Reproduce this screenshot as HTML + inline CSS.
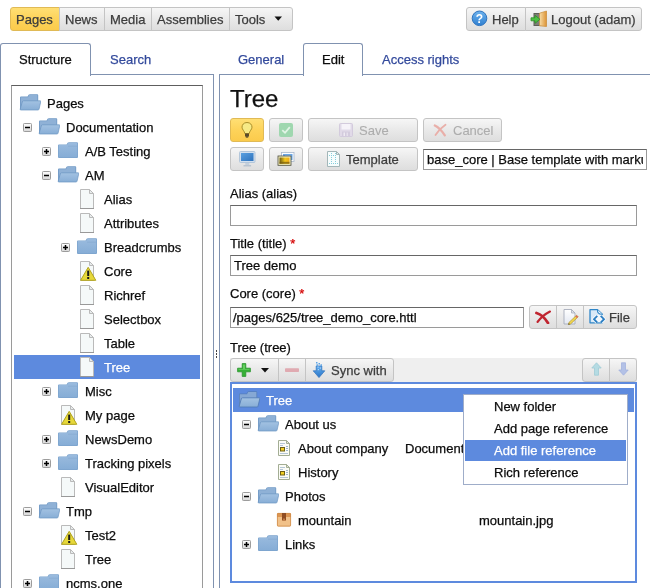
<!DOCTYPE html>
<html><head><meta charset="utf-8"><title>Pages</title>
<style>
html,body{margin:0;padding:0;background:#fff;}
body{width:650px;height:588px;overflow:hidden;position:relative;font-family:"Liberation Sans",Arial,sans-serif;font-size:13px;color:#0c0c0c;-webkit-text-stroke:0.25px;}
div,svg{position:absolute;box-sizing:border-box;}
.btn{border:1px solid #c4c4c4;background:linear-gradient(#f6f6f6,#e9e9e9 50%,#dedede);height:24px;line-height:24px;white-space:nowrap;color:#3c3c3c;padding-top:0}
.btn.y{background:linear-gradient(#ffdf74,#fdd35a 50%,#fbcb4c);border-color:#e0ba56;}
.btn.dis{color:#adadad;-webkit-text-stroke:0.1px}
.btn span{position:absolute;top:0;line-height:23px}
.lbl{white-space:nowrap;line-height:16px;height:16px;}
.w{color:#fff;}
.sel{background:#5d8ade;}
.inp{border:1px solid #9a9a9a;border-top-color:#666;background:#fff;height:21px;line-height:19px;padding-left:3px;white-space:nowrap;overflow:hidden;}
.blue{color:#334a9c;}
.red{color:#d40000;}

#root{left:0;top:0;width:650px;height:588px;will-change:transform;}
</style></head><body><div id="root">
<svg width="0" height="0" style="position:absolute">
<defs>
<linearGradient id="gfb" x1="0" y1="0" x2="0" y2="1"><stop offset="0" stop-color="#a3c2e2"/><stop offset="1" stop-color="#88aed6"/></linearGradient>
<linearGradient id="gfc" x1="0" y1="0" x2="0" y2="1"><stop offset="0" stop-color="#9abbde"/><stop offset="1" stop-color="#86add6"/></linearGradient>
<linearGradient id="gex" x1="0" y1="0" x2="0" y2="1"><stop offset="0" stop-color="#ffffff"/><stop offset="1" stop-color="#d6d6d6"/></linearGradient>
<symbol id="fc" viewBox="0 0 22 22">
 <path d="M1 5.400 Q1 4.400 2 4.400 L9.600 4.400 L10.600 2.800 Q11 2.200 12 2.200 L20 2.200 Q21 2.200 21 3.200 L21 17 Q21 18 20 18 L2 18 Q1 18 1 17 Z" fill="#7ba3cd"/>
 <path d="M1.700 5.600 Q1.700 5.100 2.200 5.100 L10 5.100 L11.200 3.200 Q11.400 2.900 12 2.900 L19.800 2.900 Q20.300 2.900 20.300 3.400 L20.300 16.600 Q20.300 17.300 19.600 17.300 L2.400 17.300 Q1.700 17.300 1.700 16.600 Z" fill="url(#gfc)"/>
 <rect x="11" y="5.800" width="9.300" height=".7" fill="#7ba3cd" opacity=".6"/>
</symbol>
<symbol id="fo" viewBox="0 0 22 22">
 <path d="M1 5.400 Q1 4.400 2 4.400 L8.600 4.400 L9.600 2.800 Q10 2.200 11 2.200 L18.200 2.200 Q19.200 2.200 19.200 3.200 L19.200 10 L3 18 L1 17.500 Z" fill="#7099c5"/>
 <path d="M1.800 5.300 L9 5.300 L10.200 3 L18.400 3 L18.400 9 L3.500 9 L1.800 16 Z" fill="#8fb1d6"/>
 <path d="M4.400 8.800 L21.200 8.800 Q22 8.800 21.800 9.600 L20 17.300 Q19.800 18 19 18 L1.900 18 Q1 18 1.200 17.200 L3.400 9.600 Q3.600 8.800 4.400 8.800 Z" fill="url(#gfb)" stroke="#6c95c1" stroke-width=".7"/>
</symbol>
<symbol id="fos" viewBox="0 0 22 22">
 <path d="M1 5.400 Q1 4.400 2 4.400 L8.600 4.400 L9.600 2.800 Q10 2.200 11 2.200 L18.200 2.200 Q19.200 2.200 19.200 3.200 L19.200 10 L3 18 L1 17.500 Z" fill="#557fbb"/>
 <path d="M1.800 5.300 L9 5.300 L10.200 3 L18.400 3 L18.400 9 L3.500 9 L1.800 16 Z" fill="#86a8d4"/>
 <path d="M4.400 8.800 L21.200 8.800 Q22 8.800 21.800 9.600 L20 17.300 Q19.800 18 19 18 L1.900 18 Q1 18 1.200 17.200 L3.400 9.600 Q3.600 8.800 4.400 8.800 Z" fill="url(#gfb)" stroke="#4f78b4" stroke-width=".8"/>
</symbol>
<symbol id="pg" viewBox="0 0 22 22">
 <path d="M4.500 1.500 L13.500 1.500 L17.500 5.500 L17.500 20.500 L4.500 20.500 Z" fill="#f5f9f9" stroke="#bababa" stroke-width="1"/>
 <path d="M13.500 1.500 L13.500 5.500 L17.500 5.500 Z" fill="#e8ecec" stroke="#bababa" stroke-width="1" stroke-linejoin="round"/>
 <rect x="4" y="20" width="14" height="1" fill="#999"/>
</symbol>
<symbol id="wr" viewBox="0 0 22 22">
 <path d="M4.500 1.500 L13.500 1.500 L17.500 5.500 L17.500 20.500 L4.500 20.500 Z" fill="#f5f9f9" stroke="#bababa" stroke-width="1"/>
 <path d="M13.500 1.500 L13.500 5.500 L17.500 5.500 Z" fill="#e8ecec" stroke="#bababa" stroke-width="1" stroke-linejoin="round"/>
 <path d="M12.200 7.300 L19.800 20.300 L4.600 20.300 Z" fill="#e6d83a" stroke="#b3a41c" stroke-width="1" stroke-linejoin="round"/>
 <rect x="11.200" y="10.600" width="2" height="5.400" fill="#1a1a1a"/><rect x="11.200" y="17" width="2" height="2" fill="#1a1a1a"/>
</symbol>
<symbol id="pr" viewBox="0 0 16 16">
 <path d="M2.500 0.500 L10.500 0.500 L13.500 3.500 L13.500 15.500 L2.500 15.500 Z" fill="#fbfcf6" stroke="#a3ad94" stroke-width="1"/>
 <path d="M10.500 0.500 L10.500 3.500 L13.500 3.500 Z" fill="#e3e8d8" stroke="#a3ad94" stroke-width="1" stroke-linejoin="round"/>
 <rect x="4.500" y="7.500" width="4" height="3.500" fill="#f1cf24" stroke="#6d5e16" stroke-width="1"/>
 <rect x="4" y="3" width="5" height="1" fill="#b5c6d8"/><rect x="4" y="5" width="3" height="1" fill="#b5c6d8"/>
 <rect x="10" y="6" width="2" height="1" fill="#9db4cc"/><rect x="10" y="8" width="2" height="1" fill="#9db4cc"/><rect x="10" y="10" width="2" height="1" fill="#9db4cc"/>
 <rect x="4" y="13" width="8" height="1" fill="#b5c6d8"/>
</symbol>
<symbol id="bx" viewBox="0 0 16 16">
 <rect x="1" y="1" width="14" height="13.500" rx="1.200" fill="#f1c189"/>
 <path d="M1 2.200 Q1 1 2.200 1 L13.800 1 Q15 1 15 2.200 L15 5 L1 5 Z" fill="#dc9552"/>
 <rect x="1.400" y="1.400" width="13.200" height="12.700" rx="1" fill="none" stroke="#cf8b4a" stroke-width=".8"/>
 <rect x="6" y="1" width="4" height="7.500" fill="#8f4c22"/>
 <rect x="7" y="6.500" width="2" height="2" fill="#c27a43"/>
</symbol>
<symbol id="plus" viewBox="0 0 9 9">
 <rect x="0.500" y="0.500" width="8" height="8" rx=".8" fill="url(#gex)" stroke="#9c9c9c"/>
 <rect x="2" y="3.750" width="5" height="1.500" fill="#000"/><rect x="3.750" y="2" width="1.500" height="5" fill="#000"/>
</symbol>
<symbol id="minus" viewBox="0 0 9 9">
 <rect x="0.500" y="0.500" width="8" height="8" rx=".8" fill="url(#gex)" stroke="#9c9c9c"/>
 <rect x="2" y="3.750" width="5" height="1.500" fill="#000"/>
</symbol>
</defs></svg>

<!-- top toolbar -->
<div class="btn y" style="left:10px;top:7px;width:50px;border-radius:3px 0 0 3px"><span style="left:5px">Pages</span></div>
<div class="btn" style="left:59px;top:7px;width:46px;"><span style="left:5px">News</span></div>
<div class="btn" style="left:104px;top:7px;width:48px"><span style="left:5px">Media</span></div>
<div class="btn" style="left:151px;top:7px;width:79px"><span style="left:5px">Assemblies</span></div>
<div class="btn" style="left:229px;top:7px;width:64px;border-radius:0 3px 3px 0"><span style="left:5px">Tools</span></div>
<svg style="left:274px;top:16px" width="9" height="6"><path d="M0.500 0.500 L8 0.500 L4.250 4.800 Z" fill="#111"/></svg>

<div class="btn" style="left:466px;top:7px;width:60px;border-radius:3px 0 0 3px"><span style="left:25px">Help</span></div>
<div class="btn" style="left:525px;top:7px;width:117px;border-radius:0 3px 3px 0"><span style="left:25px">Logout (adam)</span></div>
<svg style="left:471px;top:10px" width="17" height="17"><defs><linearGradient id="gh" x1="0" y1="0" x2="0" y2="1"><stop offset="0" stop-color="#6db3ee"/><stop offset="1" stop-color="#2f7fd0"/></linearGradient></defs><circle cx="8.500" cy="8.300" r="7.300" fill="url(#gh)" stroke="#2f73bd"/><text x="8.500" y="12.500" font-size="12" font-weight="bold" fill="#fff" text-anchor="middle" font-family="Liberation Sans,sans-serif">?</text></svg>
<svg style="left:529px;top:9px" width="20" height="20">
 <defs><linearGradient id="gdo" x1="0" y1="0" x2="1" y2="0"><stop offset="0" stop-color="#f7dca6"/><stop offset="1" stop-color="#dc9336"/></linearGradient></defs>
 <rect x="5" y="4.500" width="9" height="12" fill="#7d7d75" stroke="#5e5e58"/>
 <path d="M10.500 4.200 L17.500 2 L17.500 17.500 L10.500 16.800 Z" fill="url(#gdo)" stroke="#c98a34" stroke-width=".7"/>
 <path d="M2 8.800 L6 8.800 L6 6.300 L11 10.300 L6 14.300 L6 11.800 L2 11.800 Z" fill="#4cc042" stroke="#2f8f2a" stroke-width=".8" stroke-linejoin="round"/>
</svg>

<!-- left tabview -->
<div style="left:0;top:74px;width:214px;height:530px;border:1px solid #8092b0;"></div>
<div style="left:0;top:43px;width:91px;height:33px;border:1px solid #8092b0;border-bottom:0;border-radius:3px 3px 0 0;background:#fff"></div>
<div class="lbl" style="left:19px;top:52px">Structure</div>
<div class="lbl blue" style="left:110px;top:52px">Search</div>
<div style="left:11px;top:85px;width:192px;height:520px;border:1px solid #9a9a9a;border-top-color:#5e5e5e;"></div>
<svg class="ic" style="left:19px;top:92px" width="22" height="22"><use href="#fo"/></svg>
<div class="lbl" style="left:47px;top:96px">Pages</div>
<svg class="ic" style="left:23px;top:123px" width="9" height="9"><use href="#minus"/></svg>
<svg class="ic" style="left:38px;top:116px" width="22" height="22"><use href="#fo"/></svg>
<div class="lbl" style="left:66px;top:120px">Documentation</div>
<svg class="ic" style="left:42px;top:147px" width="9" height="9"><use href="#plus"/></svg>
<svg class="ic" style="left:57px;top:140px" width="22" height="22"><use href="#fc"/></svg>
<div class="lbl" style="left:85px;top:144px">A/B Testing</div>
<svg class="ic" style="left:42px;top:171px" width="9" height="9"><use href="#minus"/></svg>
<svg class="ic" style="left:57px;top:164px" width="22" height="22"><use href="#fo"/></svg>
<div class="lbl" style="left:85px;top:168px">AM</div>
<svg class="ic" style="left:76px;top:188px" width="22" height="22"><use href="#pg"/></svg>
<div class="lbl" style="left:104px;top:192px">Alias</div>
<svg class="ic" style="left:76px;top:212px" width="22" height="22"><use href="#pg"/></svg>
<div class="lbl" style="left:104px;top:216px">Attributes</div>
<svg class="ic" style="left:61px;top:243px" width="9" height="9"><use href="#plus"/></svg>
<svg class="ic" style="left:76px;top:236px" width="22" height="22"><use href="#fc"/></svg>
<div class="lbl" style="left:104px;top:240px">Breadcrumbs</div>
<svg class="ic" style="left:76px;top:260px" width="22" height="22"><use href="#wr"/></svg>
<div class="lbl" style="left:104px;top:264px">Core</div>
<svg class="ic" style="left:76px;top:284px" width="22" height="22"><use href="#pg"/></svg>
<div class="lbl" style="left:104px;top:288px">Richref</div>
<svg class="ic" style="left:76px;top:308px" width="22" height="22"><use href="#pg"/></svg>
<div class="lbl" style="left:104px;top:312px">Selectbox</div>
<svg class="ic" style="left:76px;top:332px" width="22" height="22"><use href="#pg"/></svg>
<div class="lbl" style="left:104px;top:336px">Table</div>
<div class="sel" style="left:14px;top:355px;width:186px;height:24px"></div>
<svg class="ic" style="left:76px;top:356px" width="22" height="22"><use href="#pg"/></svg>
<div class="lbl w" style="left:104px;top:360px">Tree</div>
<svg class="ic" style="left:42px;top:387px" width="9" height="9"><use href="#plus"/></svg>
<svg class="ic" style="left:57px;top:380px" width="22" height="22"><use href="#fc"/></svg>
<div class="lbl" style="left:85px;top:384px">Misc</div>
<svg class="ic" style="left:57px;top:404px" width="22" height="22"><use href="#wr"/></svg>
<div class="lbl" style="left:85px;top:408px">My page</div>
<svg class="ic" style="left:42px;top:435px" width="9" height="9"><use href="#plus"/></svg>
<svg class="ic" style="left:57px;top:428px" width="22" height="22"><use href="#fc"/></svg>
<div class="lbl" style="left:85px;top:432px">NewsDemo</div>
<svg class="ic" style="left:42px;top:459px" width="9" height="9"><use href="#plus"/></svg>
<svg class="ic" style="left:57px;top:452px" width="22" height="22"><use href="#fc"/></svg>
<div class="lbl" style="left:85px;top:456px">Tracking pixels</div>
<svg class="ic" style="left:57px;top:476px" width="22" height="22"><use href="#pg"/></svg>
<div class="lbl" style="left:85px;top:480px">VisualEditor</div>
<svg class="ic" style="left:23px;top:507px" width="9" height="9"><use href="#minus"/></svg>
<svg class="ic" style="left:38px;top:500px" width="22" height="22"><use href="#fo"/></svg>
<div class="lbl" style="left:66px;top:504px">Tmp</div>
<svg class="ic" style="left:57px;top:524px" width="22" height="22"><use href="#wr"/></svg>
<div class="lbl" style="left:85px;top:528px">Test2</div>
<svg class="ic" style="left:57px;top:548px" width="22" height="22"><use href="#pg"/></svg>
<div class="lbl" style="left:85px;top:552px">Tree</div>
<svg class="ic" style="left:23px;top:579px" width="9" height="9"><use href="#plus"/></svg>
<svg class="ic" style="left:38px;top:572px" width="22" height="22"><use href="#fc"/></svg>
<div class="lbl" style="left:66px;top:576px">ncms.one</div>

<!-- splitter -->
<div style="left:216px;top:350px;width:1px;height:1.500px;background:#444"></div>
<div style="left:216px;top:353px;width:1px;height:1.500px;background:#444"></div>
<div style="left:216px;top:356px;width:1px;height:1.500px;background:#444"></div>

<!-- right tabview -->
<div style="left:219px;top:74px;width:440px;height:530px;border:1px solid #8092b0;"></div>
<div style="left:303px;top:43px;width:60px;height:33px;border:1px solid #8092b0;border-bottom:0;border-radius:3px 3px 0 0;background:#fff"></div>
<div class="lbl blue" style="left:238px;top:52px">General</div>
<div class="lbl" style="left:322px;top:52px">Edit</div>
<div class="lbl blue" style="left:382px;top:52px">Access rights</div>

<div style="left:230px;top:84px;font-size:24px;line-height:30px;color:#111">Tree</div>

<!-- row1 -->
<div class="btn y" style="left:230px;top:118px;width:34px;border-radius:3px"></div>
<svg style="left:239px;top:121px" width="16" height="18">
 <path d="M8 1.500 C4.500 1.500 3 4 3 6.200 C3 8.500 5.500 10 5.800 12.500 L10.200 12.500 C10.500 10 13 8.500 13 6.200 C13 4 11.500 1.500 8 1.500 Z" fill="#f7ea86" stroke="#a98f2a" stroke-width="1"/>
 <rect x="6" y="12.500" width="4" height="3" fill="#5a4a2a"/><rect x="6.800" y="15.500" width="2.400" height="1" fill="#222"/>
</svg>
<div class="btn" style="left:269px;top:118px;width:34px;border-radius:3px"></div>
<svg style="left:279px;top:123px" width="14" height="14"><rect x="0" y="0" width="14" height="14" rx="2" fill="#9fd7af"/><path d="M3.300 7.200 L6 9.800 L10.800 4.200" fill="none" stroke="#e2f4e6" stroke-width="1.800"/></svg>
<div class="btn dis" style="left:308px;top:118px;width:110px;border-radius:3px"><span style="left:50px">Save</span></div>
<svg style="left:339px;top:123px" width="14" height="14"><rect x=".5" y=".5" width="13" height="13" rx="1" fill="#e1dae8" stroke="#d3cbdd"/><rect x="2.500" y="1" width="9" height="5.500" fill="#f6f3f9"/><rect x="3" y="8.500" width="8" height="5" fill="#d3cbdd"/><rect x="4.500" y="9.500" width="1.500" height="3.500" fill="#efebf3"/><rect x="7.500" y="9.500" width="1.500" height="3.500" fill="#e6e0ec"/></svg>
<div class="btn dis" style="left:423px;top:118px;width:79px;border-radius:3px"><span style="left:29px">Cancel</span></div>
<svg style="left:433px;top:123px" width="14" height="14"><path d="M1.800 2.500 C5 4 9 8 11.800 12.300" fill="none" stroke="#e9afa9" stroke-width="2.300" stroke-linecap="round"/><path d="M12.500 1.800 C8.500 4.500 5 8 2.500 12" fill="none" stroke="#e9afa9" stroke-width="1.800" stroke-linecap="round"/></svg>
<!-- row2 -->
<div class="btn" style="left:230px;top:147px;width:34px;border-radius:3px"></div>
<svg style="left:239px;top:151px" width="17" height="16">
 <defs><linearGradient id="gmon" x1="0" y1="0" x2="1" y2="1"><stop offset="0" stop-color="#5aa0e0"/><stop offset="1" stop-color="#2f73bd"/></linearGradient></defs>
 <rect x=".5" y=".5" width="15.500" height="11" rx="1" fill="#d3e0ee" stroke="#b3c6da"/>
 <rect x="2" y="2" width="12.500" height="8" fill="url(#gmon)"/>
 <rect x="6.300" y="12" width="4" height="2.200" fill="#c3cfdc"/><rect x="4.500" y="14" width="7.600" height="1.500" fill="#b9c4d0"/>
</svg>
<div class="btn" style="left:269px;top:147px;width:34px;border-radius:3px"></div>
<svg style="left:277px;top:151px" width="18" height="16">
 <defs><linearGradient id="gph" x1="0" y1="0" x2="1" y2="0"><stop offset="0" stop-color="#6b5a14"/><stop offset=".55" stop-color="#f3c81c"/><stop offset="1" stop-color="#f0a81a"/></linearGradient></defs>
 <rect x="4.500" y="1.500" width="12.500" height="9" fill="#fafcff" stroke="#a9b7cb" stroke-width=".8"/>
 <rect x="6" y="3" width="9.500" height="6" fill="#6aa7e8"/><rect x="8" y="4.500" width="6" height="1.500" fill="#c3dcf5"/>
 <rect x="1" y="5" width="13" height="9.300" fill="#f6f1bd" stroke="#4a4a3c" stroke-width=".8"/>
 <rect x="2.500" y="6.500" width="10" height="6.300" fill="url(#gph)"/>
 <rect x="2.500" y="10.800" width="10" height="2" fill="#7a5f10" opacity=".75"/>
</svg>
<div class="btn" style="left:308px;top:147px;width:110px;border-radius:3px"><span style="left:37px">Template</span></div>
<svg style="left:327px;top:151px" width="14" height="16">
 <path d="M.5 .5 L9.500 .5 L12.500 3.500 L12.500 15.500 L.5 15.500 Z" fill="#f7fdfd" stroke="#a3b6b8"/>
 <path d="M9.500 .5 L9.500 3.500 L12.500 3.500 Z" fill="#e3eeee" stroke="#a3b6b8" stroke-linejoin="round"/>
 <path d="M4.500 2 L4.500 14 M8.500 2 L8.500 14 M2 4.500 L9 4.500 M2 12.500 L11 12.500" stroke="#86cfdc" stroke-width="1" stroke-dasharray="1 1" fill="none"/>
</svg>
<div class="inp" style="left:423px;top:149px;width:224px;height:21px;"><div style="left:3px;top:0;width:216px;height:19px;overflow:hidden;line-height:19px">base_core | Base template with marku</div></div>

<div class="lbl" style="left:230px;top:186px">Alias (alias)</div>
<div class="inp" style="left:230px;top:205px;width:407px"></div>
<div class="lbl" style="left:230px;top:236px">Title (title) <span class="red">*</span></div>
<div class="inp" style="left:230px;top:255px;width:407px">Tree demo</div>
<div class="lbl" style="left:230px;top:286px">Core (core) <span class="red">*</span></div>
<div class="inp" style="left:230px;top:307px;width:294px;padding-left:2px">/pages/625/tree_demo_core.httl</div>
<div class="btn" style="left:529px;top:305px;width:28px;border-radius:3px 0 0 3px"></div>
<svg style="left:535px;top:310px" width="17" height="14"><path d="M1.500 3 C5 4 10 8 13 13" fill="none" stroke="#c02530" stroke-width="2.800" stroke-linecap="round"/><path d="M15 1.500 C10 4 5.500 8 2.500 12" fill="none" stroke="#c02530" stroke-width="2.100" stroke-linecap="round"/></svg>
<div class="btn" style="left:556px;top:305px;width:29px"></div>
<svg style="left:563px;top:308px" width="17" height="18">
 <defs><linearGradient id="ged" x1="0" y1="0" x2="0" y2="1"><stop offset="0" stop-color="#ffffff"/><stop offset="1" stop-color="#e3e8f2"/></linearGradient></defs>
 <path d="M1 1.500 L8.500 1.500 L12 5 L12 16 L1 16 Z" fill="url(#ged)" stroke="#a7adbb" stroke-width=".9"/>
 <path d="M8.500 1.500 L8.500 5 L12 5 Z" fill="#dfe3ec" stroke="#a7adbb" stroke-width=".8" stroke-linejoin="round"/>
 <path d="M13.600 7.200 L15.200 8.800 L7.600 16 L5.400 16.600 L6 14.400 Z" fill="#f0d64e" stroke="#a88a22" stroke-width=".6"/>
 <path d="M13.600 7.200 L15.200 8.800 L13.900 10 L12.300 8.400 Z" fill="#dc6a5c"/>
 <path d="M5.400 16.600 L5.800 15.200 L6.800 16.200 Z" fill="#1a1a1a"/>
</svg>
<div class="btn" style="left:583px;top:305px;width:54px;border-radius:0 3px 3px 0"><span style="left:25px">File</span></div>
<svg style="left:588px;top:308px" width="18" height="17">
 <path d="M2 1.700 L9.500 1.700 L14.300 6.200 L14.300 14.800 L2 14.800 Z" fill="#d9e9f7" stroke="#2f86c8" stroke-width="1.300" stroke-linejoin="round"/>
 <path d="M9.500 1.700 C9.300 4 10 6.200 14.300 6.200" fill="#f4f9fd" stroke="#2f86c8" stroke-width="1.100"/>
 <rect x="8" y="7" width="6" height="7.200" fill="#f3f8fc"/>
 <path d="M9.300 7.800 L6 11.200 L9.300 14.600 M12.700 7.800 L16 11.200 L12.700 14.600" fill="none" stroke="#f3f8fc" stroke-width="3.600" stroke-linejoin="miter"/>
 <path d="M9.300 7.800 L6 11.200 L9.300 14.600 M12.700 7.800 L16 11.200 L12.700 14.600" fill="none" stroke="#2a7dc2" stroke-width="1.800"/>
</svg>

<div class="lbl" style="left:230px;top:340px">Tree (tree)</div>
<div style="left:230px;top:358px;width:407px;height:24px;background:#efefef"></div>
<div class="btn" style="left:230px;top:358px;width:49px;border-radius:3px 0 0 3px"></div>
<svg style="left:237px;top:363px" width="14" height="14"><path d="M5.200 .6 L8.800 .6 L8.800 5.200 L13.400 5.200 L13.400 8.800 L8.800 8.800 L8.800 13.400 L5.200 13.400 L5.200 8.800 L.6 8.800 L.6 5.200 L5.200 5.200 Z" fill="#35b035" stroke="#2a962d" stroke-width=".8"/><path d="M6 1.500 L8 1.500 L8 6 L12.500 6 L12.500 6.800 L1.500 6.800 L1.500 6 L6 6 Z" fill="#76d870" opacity=".75"/></svg>
<svg style="left:261px;top:368px" width="9" height="6"><path d="M0 0 L8 0 L4 4.600 Z" fill="#111"/></svg>
<div class="btn" style="left:278px;top:358px;width:28px"></div>
<svg style="left:284px;top:367px" width="16" height="6"><rect x="1" y="1.300" width="14" height="3.700" rx=".8" fill="#e0aab1"/></svg>
<div class="btn" style="left:305px;top:358px;width:89px;border-radius:0 3px 3px 0"><span style="left:25px">Sync with</span></div>
<svg style="left:311px;top:361px" width="16" height="18">
 <defs><linearGradient id="gsy" x1="0" y1="0" x2="0" y2="1"><stop offset="0" stop-color="#62aef0"/><stop offset="1" stop-color="#2a74c6"/></linearGradient></defs>
 <path d="M5.200 5 L10.800 5 L10.800 9.800 L13.800 9.800 L8 16.600 L2.200 9.800 L5.200 9.800 Z" fill="url(#gsy)" stroke="#2d6fba" stroke-width=".7" stroke-linejoin="round"/>
 <rect x="5" y="1" width="1.500" height="1.500" fill="#5aa3e6"/><rect x="7.500" y="2" width="1.500" height="1.500" fill="#5aa3e6"/><rect x="9.500" y="3.300" width="1.500" height="1.500" fill="#5aa3e6"/><rect x="5.500" y="3.300" width="1.500" height="1.500" fill="#5aa3e6"/>
 <rect x="6.500" y="5.500" width="1.200" height="1.200" fill="#a9d2f6"/><rect x="8.800" y="6.500" width="1.200" height="1.200" fill="#a9d2f6"/><rect x="6.800" y="8" width="1.200" height="1.200" fill="#a9d2f6"/>
</svg>
<div class="btn" style="left:582px;top:358px;width:28px;border-radius:3px 0 0 3px"></div>
<svg style="left:591px;top:362px" width="11" height="14"><path d="M5.500 .8 L10.200 6 L7.500 6 L7.500 13.200 L3.500 13.200 L3.500 6 L.8 6 Z" fill="#b5dbe3" stroke="#9fcbd6" stroke-width=".8"/></svg>
<div class="btn" style="left:609px;top:358px;width:28px;border-radius:0 3px 3px 0"></div>
<svg style="left:618px;top:362px" width="11" height="14"><path d="M3.500 .8 L7.500 .8 L7.500 8 L10.200 8 L5.500 13.200 L.8 8 L3.500 8 Z" fill="#b3c1e6" stroke="#a3b3de" stroke-width=".8"/></svg>

<div style="left:230px;top:382px;width:407px;height:201px;border:2px solid #5d8ade;background:#fff"></div>
<div class="sel" style="left:233px;top:388px;width:401px;height:24px"></div>
<svg class="ic" style="left:238px;top:389px" width="22" height="22"><use href="#fos"/></svg>
<div class="lbl w" style="left:266px;top:393px">Tree</div>
<svg class="ic" style="left:242px;top:420px" width="9" height="9"><use href="#minus"/></svg>
<svg class="ic" style="left:257px;top:413px" width="22" height="22"><use href="#fo"/></svg>
<div class="lbl" style="left:285px;top:417px">About us</div>
<svg class="ic" style="left:276px;top:440px" width="16" height="16"><use href="#pr"/></svg>
<div class="lbl" style="left:298px;top:441px">About company</div>
<svg class="ic" style="left:276px;top:464px" width="16" height="16"><use href="#pr"/></svg>
<div class="lbl" style="left:298px;top:465px">History</div>
<svg class="ic" style="left:242px;top:492px" width="9" height="9"><use href="#minus"/></svg>
<svg class="ic" style="left:257px;top:485px" width="22" height="22"><use href="#fo"/></svg>
<div class="lbl" style="left:285px;top:489px">Photos</div>
<svg class="ic" style="left:276px;top:512px" width="16" height="16"><use href="#bx"/></svg>
<div class="lbl" style="left:298px;top:513px">mountain</div>
<svg class="ic" style="left:242px;top:540px" width="9" height="9"><use href="#plus"/></svg>
<svg class="ic" style="left:257px;top:533px" width="22" height="22"><use href="#fc"/></svg>
<div class="lbl" style="left:285px;top:537px">Links</div>
<div class="lbl" style="left:405px;top:441px">Document</div>
<div class="lbl" style="left:479px;top:513px">mountain.jpg</div>

<!-- menu -->
<div style="left:463px;top:394px;width:165px;height:91px;border:1px solid #9fadc9;background:#fff;"></div>
<div class="sel" style="left:465px;top:440px;width:161px;height:21px"></div>
<div class="lbl" style="left:494px;top:399px">New folder</div>
<div class="lbl" style="left:494px;top:421px">Add page reference</div>
<div class="lbl w" style="left:494px;top:443px">Add file reference</div>
<div class="lbl" style="left:494px;top:465px">Rich reference</div>
</div></body></html>
